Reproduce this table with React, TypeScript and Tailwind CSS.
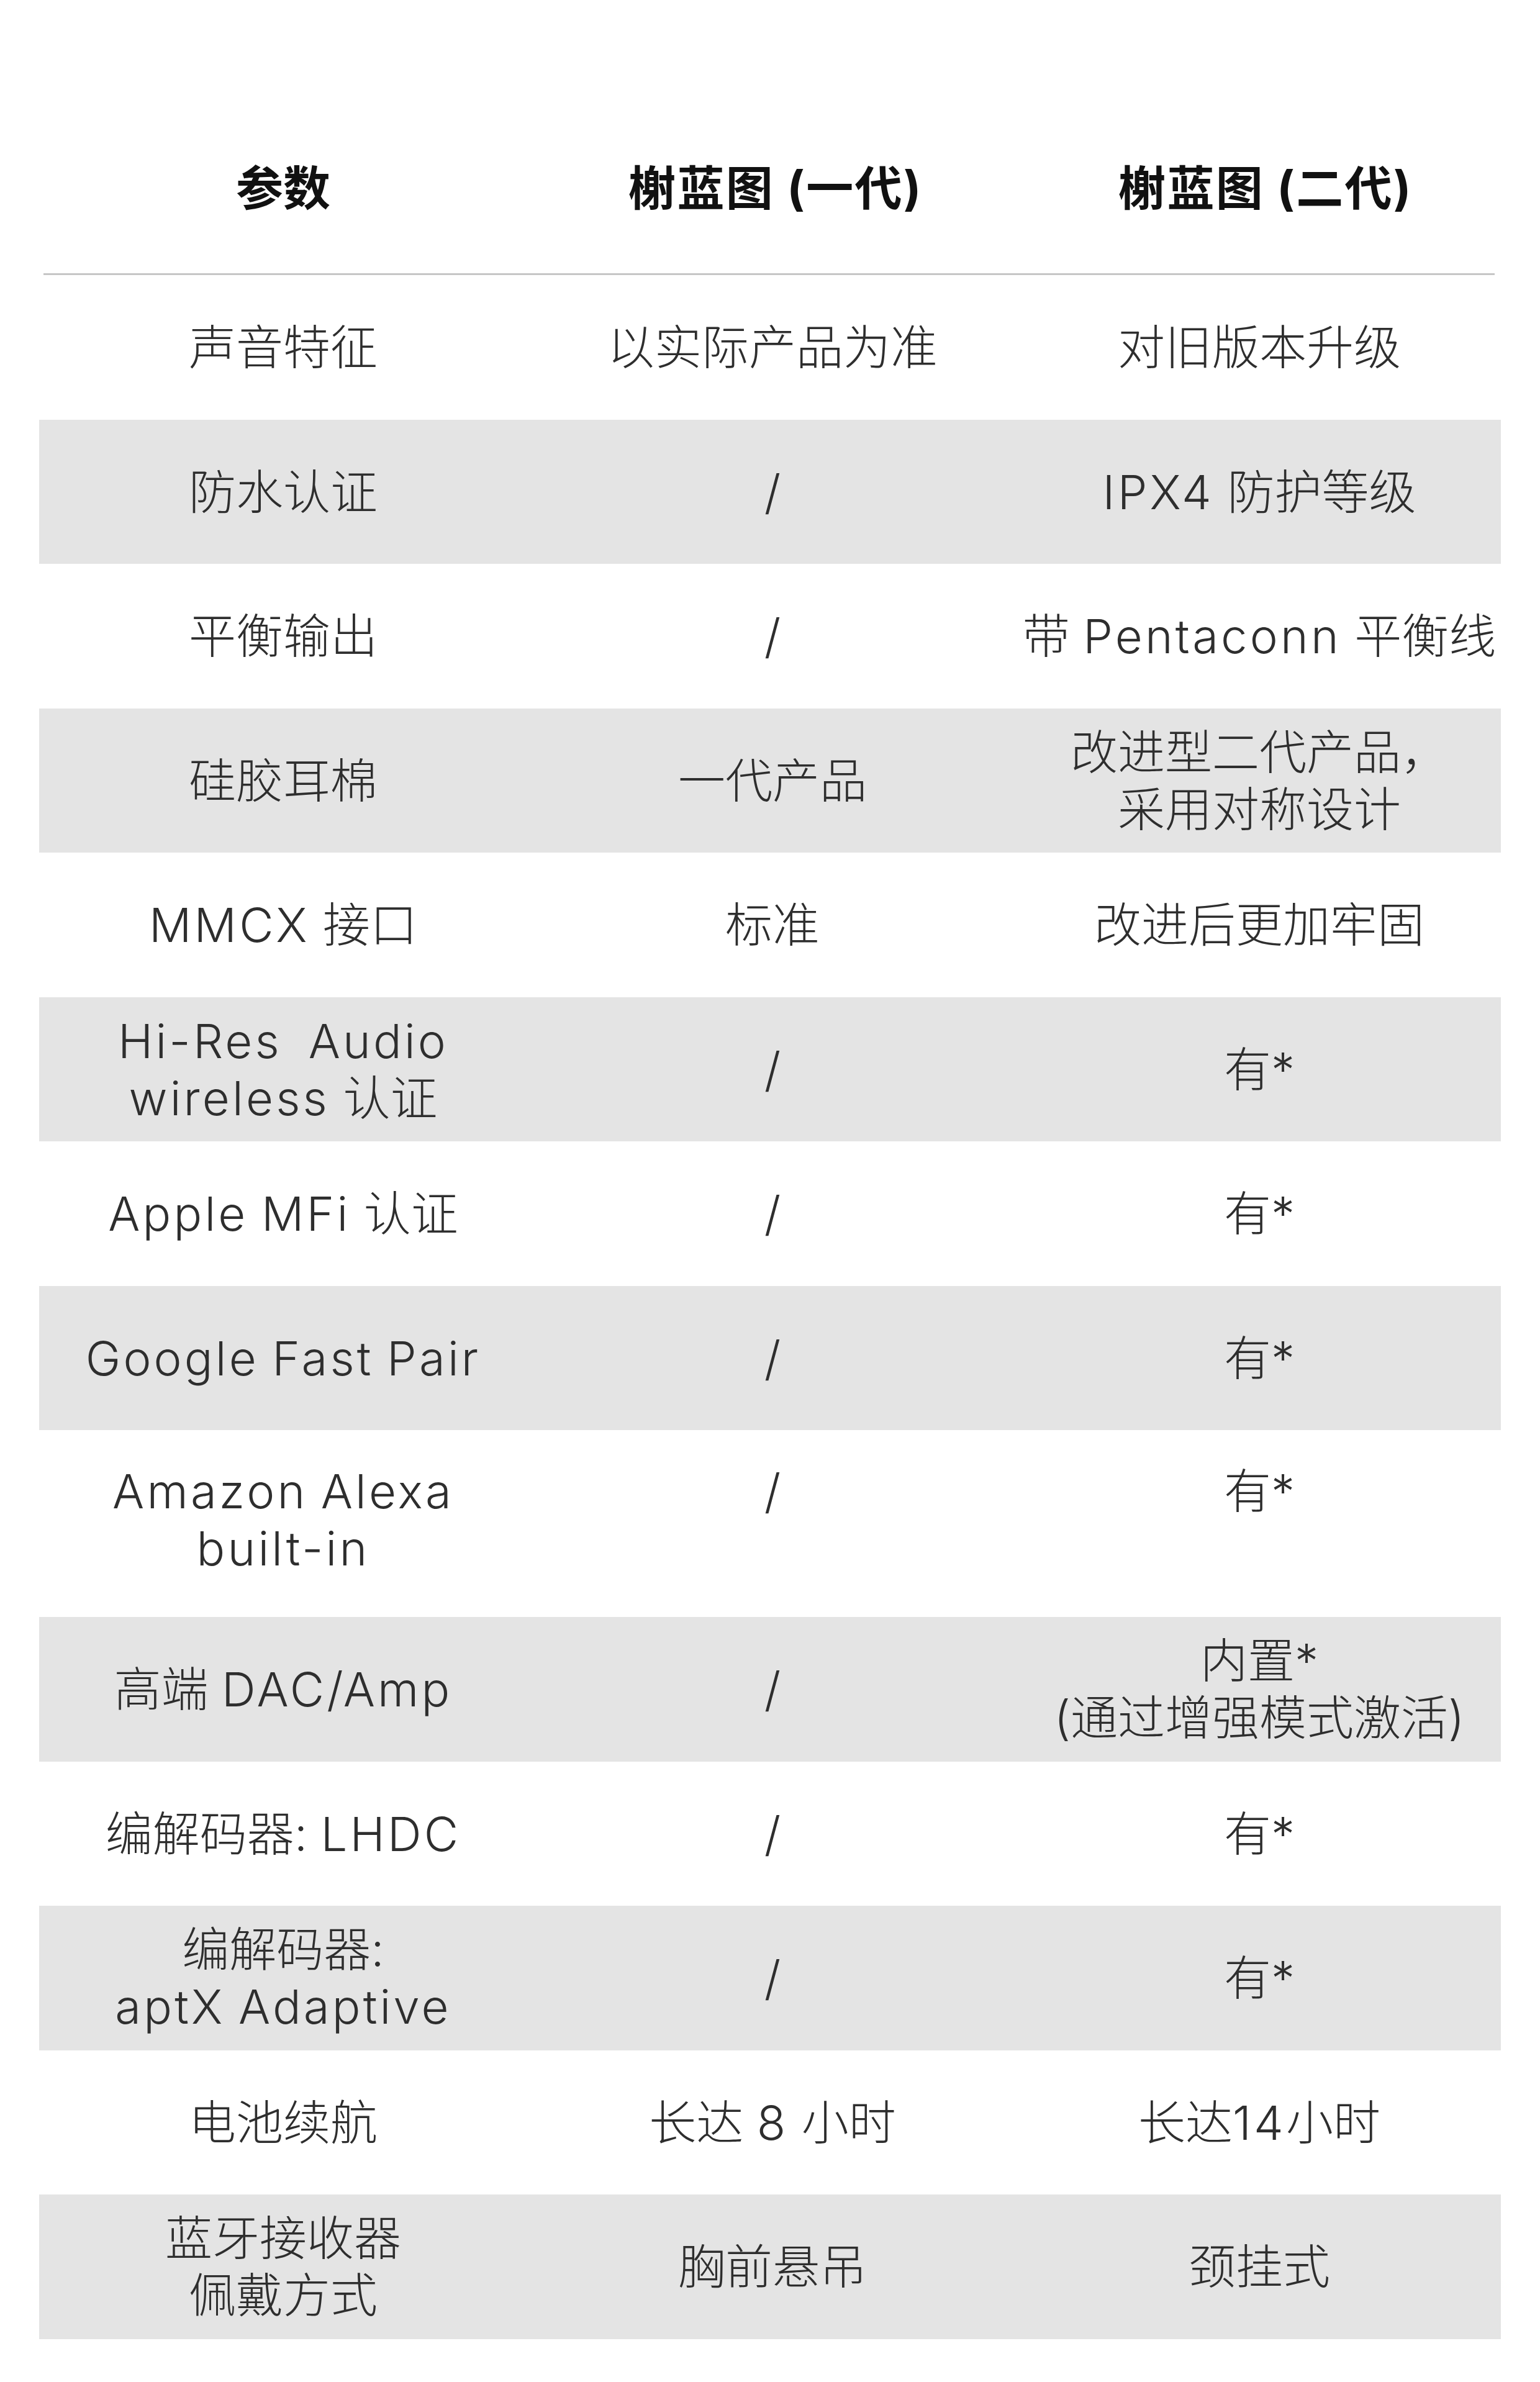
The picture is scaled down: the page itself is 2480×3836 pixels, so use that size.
type Cell = string | string[];
type Row = { a: Cell; b: Cell; c: Cell; tall?: boolean };

const ROWS: Row[] = [
  { a: "声音特征", b: "以实际产品为准", c: "对旧版本升级" },
  { a: "防水认证", b: "/", c: "IPX4 防护等级" },
  { a: "平衡输出", b: "/", c: "带 Pentaconn 平衡线" },
  { a: "硅胶耳棉", b: "一代产品", c: ["改进型二代产品，", "采用对称设计"] },
  { a: "MMCX 接口", b: "标准", c: "改进后更加牢固" },
  { a: ["Hi-Res\u00a0 Audio", "wireless 认证"], b: "/", c: "有*" },
  { a: "Apple MFi 认证", b: "/", c: "有*" },
  { a: "Google Fast Pair", b: "/", c: "有*" },
  { a: ["Amazon Alexa", "built-in"], b: "/", c: "有*", tall: true },
  { a: "高端 DAC/Amp", b: "/", c: ["内置*", "(通过增强模式激活)"] },
  { a: "编解码器: LHDC", b: "/", c: "有*" },
  { a: ["编解码器:", "aptX Adaptive"], b: "/", c: "有*" },
  { a: "电池续航", b: "长达 8 小时", c: "长达14小时" },
  { a: ["蓝牙接收器", "佩戴方式"], b: "胸前悬吊", c: "颈挂式" },
];

// latin words get a little extra tracking so they read wide like the original face
function Text({ s }: { s: string }) {
  return (
    <>
      {s
        .split(/([A-Za-z0-9\-:*().]+)/)
        .filter(Boolean)
        .map((p, i) =>
          /[A-Za-z0-9]/.test(p) ? (
            <span key={i} className="tracking-[0.055em]">
              {p}
            </span>
          ) : (
            <span key={i}>{p}</span>
          ),
        )}
    </>
  );
}

function CellView({ v }: { v: Cell }) {
  const lines = Array.isArray(v) ? v : [v];
  return (
    <div className="flex flex-col items-center text-center">
      {lines.map((l, i) => (
        <div key={i} className="whitespace-nowrap">
          <Text s={l} />
        </div>
      ))}
    </div>
  );
}

export default function App() {
  return (
    <div className="min-h-[3836px] w-[2480px] bg-white font-['Inter','Noto_Sans_CJK_SC',sans-serif] text-[76px] leading-[92px]">
      {/* header */}
      <div className="mx-[63px] grid grid-cols-[786px_800px_778px] pt-[257px] pb-[91px] font-bold text-[#111]">
        <div className="text-center">参数</div>
        <div className="text-center tracking-[0.03em]">榭蓝图 (一代)</div>
        <div className="text-center tracking-[0.03em]">榭蓝图 (二代)</div>
      </div>
      <div className="ml-[70px] mr-[73px] h-[3px] bg-[#c6c6c6]" />

      <div className="mx-[63px] flex flex-col font-light text-[#2e2e2e]">
        {ROWS.map((r, i) => (
          <div
            key={i}
            className={`grid grid-cols-[786px_790px_778px] ${
              r.tall ? "h-[301px] items-start pt-[52px]" : "h-[232.5px] items-center"
            } ${i % 2 === 1 ? "bg-[#e4e4e4]" : "bg-white"}`}
          >
            <CellView v={r.a} />
            <CellView v={r.b} />
            <CellView v={r.c} />
          </div>
        ))}
      </div>
    </div>
  );
}
